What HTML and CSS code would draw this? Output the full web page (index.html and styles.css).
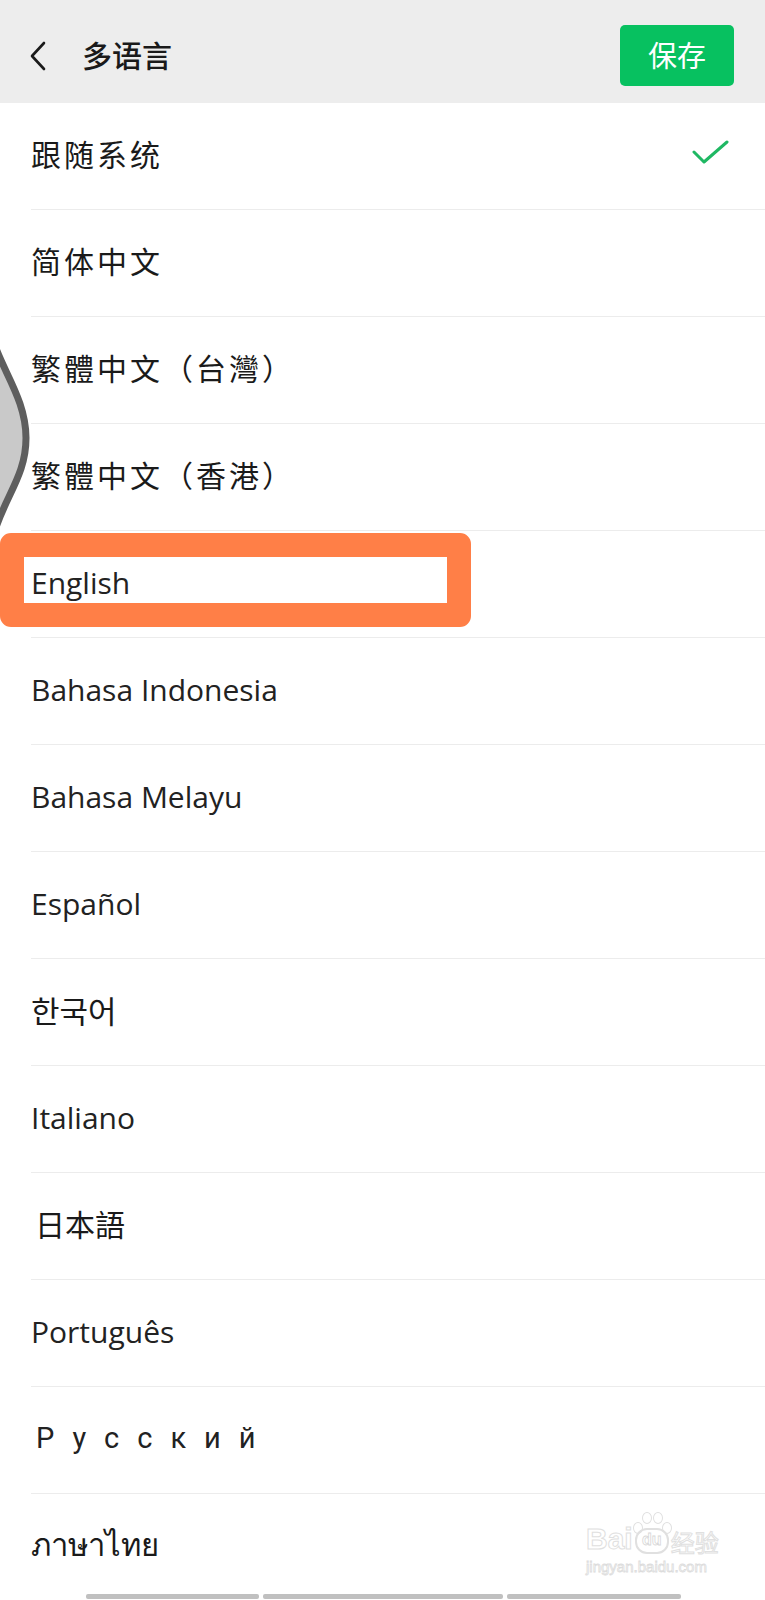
FILE: index.html
```html
<!DOCTYPE html>
<html lang="zh-CN">
<head>
    <meta charset="UTF-8">
    <meta name="viewport" content="width=device-width, initial-scale=1.0">
    <title>多语言</title>
    <link rel="stylesheet" href="styles.css">
</head>
<body>
    <div class="screen">
        <header class="topbar">
            <div class="topbar-left">
                <svg class="back-icon" width="18" height="30" viewBox="0 0 18 30">
                    <polyline points="15,2 3,15 15,28" fill="none" stroke="#1a1a1a" stroke-width="2.6" stroke-linecap="round" stroke-linejoin="round"/>
                </svg>
                <h1 class="title">多语言</h1>
            </div>
            <button type="button" class="save-btn">保存</button>
        </header>

        <ul class="lang-list">
            <li class="lang-item cjk">
                <span>跟随系统</span>
                <svg class="check" width="38" height="28" viewBox="0 0 38 28">
                    <polyline points="2,13 12,23 35,3" fill="none" stroke="#1fb863" stroke-width="3" stroke-linecap="round" stroke-linejoin="round"/>
                </svg>
            </li>
            <li class="lang-item cjk"><span>简体中文</span></li>
            <li class="lang-item cjk tc"><span>繁體中文（台灣）</span></li>
            <li class="lang-item cjk tc"><span>繁體中文（香港）</span></li>
            <li class="lang-item latin"><span>English</span></li>
            <li class="lang-item latin"><span>Bahasa Indonesia</span></li>
            <li class="lang-item latin"><span>Bahasa Melayu</span></li>
            <li class="lang-item latin"><span>Español</span></li>
            <li class="lang-item kr"><span>한국어</span></li>
            <li class="lang-item latin"><span>Italiano</span></li>
            <li class="lang-item cjk jp"><span>日本語</span></li>
            <li class="lang-item latin"><span>Português</span></li>
            <li class="lang-item ru"><span>Русский</span></li>
            <li class="lang-item th"><span>ภาษาไทย</span></li>
        </ul>

        <!-- side drawer handle -->
        <svg class="side-handle" width="40" height="190" viewBox="0 0 40 190">
            <path d="M-6,0 C4,30 26,58 26,95 C26,132 6,152 -6,190 Z" fill="#c9c9c9" stroke="#5e5e5e" stroke-width="7"/>
        </svg>

        <!-- highlight frame around English -->
        <div class="highlight"></div>

        <div class="watermark">
            <div class="wm-logo">
                <span>Bai</span>
                <span class="wm-paw">
                    <i class="toe t1"></i><i class="toe t2"></i><i class="toe t3"></i><i class="toe t4"></i>
                    <b>du</b>
                </span>
                <span class="wm-cn">经验</span>
            </div>
            <div class="wm-url">jingyan.baidu.com</div>
        </div>

        <div class="scroll-bars">
            <span class="bar b1"></span>
            <span class="bar b2"></span>
            <span class="bar b3"></span>
        </div>
    </div>
</body>
</html>
```

FILE: styles.css
```css
body {
    margin: 0;
    padding: 0;
    background-color: #fff;
    font-family: "Noto Sans CJK SC", sans-serif;
    color: #1a1a1a;
}

.screen {
    position: relative;
    width: 765px;
    height: 1600px;
    overflow: hidden;
    background-color: #fff;
}

/* top bar */

.topbar {
    height: 103px;
    box-sizing: border-box;
    padding: 8px 31px 0 29px;
    background-color: #ededed;
    display: flex;
    align-items: center;
    justify-content: space-between;
}

.topbar-left {
    display: flex;
    align-items: center;
}

.back-icon {
    display: block;
}

.title {
    margin: 0 0 4px 35px;
    font-size: 30px;
    font-weight: 500;
    letter-spacing: 0;
    line-height: 1;
}

.save-btn {
    width: 114px;
    height: 61px;
    border: none;
    border-radius: 5px;
    background-color: #07c160;
    color: #fff;
    font-family: "Noto Sans CJK SC", sans-serif;
    font-size: 29px;
    padding: 0 0 3px 0;
    margin-top: 0;
}

/* language list */

.lang-list {
    list-style: none;
    margin: 0;
    padding: 0;
}

.lang-item {
    box-sizing: border-box;
    height: 107px;
    margin-left: 31px;
    padding: 0 35px 4px 0;
    border-bottom: 1px solid #ececec;
    display: flex;
    align-items: center;
    justify-content: space-between;
    font-size: 29px;
}

.lang-item.cjk {
    font-family: "Noto Sans CJK SC", serif;
    font-size: 30px;
    letter-spacing: 3px;
    padding-bottom: 6px;
}

.lang-item.tc {
    font-family: "Noto Sans CJK TC", serif;
    letter-spacing: 3px;
}

.lang-item.jp {
    font-family: "Noto Sans CJK JP", serif;
    padding-left: 4px;
    letter-spacing: 0;
}

.lang-item.latin {
    font-family: "Open Sans", Lato, sans-serif;
    font-size: 30px;
    color: #222;
}

.lang-item.kr {
    font-family: "Noto Sans CJK KR", sans-serif;
    font-size: 31px;
    padding-bottom: 6px;
}

.lang-item.ru {
    font-family: Roboto, sans-serif;
    font-size: 29px;
    letter-spacing: 18px;
    padding-left: 5px;
    font-weight: 400;
    color: #222;
}

.lang-item.th {
    font-family: "Noto Sans", "DejaVu Sans", sans-serif;
    font-size: 31px;
}

.check {
    display: block;
}

/* overlays */

.side-handle {
    position: absolute;
    left: 0;
    top: 343px;
}

.highlight {
    position: absolute;
    left: 0;
    top: 533px;
    width: 471px;
    height: 94px;
    box-sizing: border-box;
    border: 24px solid #ff7f47;
    border-radius: 11px;
}

.watermark {
    position: absolute;
    left: 586px;
    top: 1508px;
    width: 140px;
    color: #fff;
    font-family: "Liberation Sans", sans-serif;
    -webkit-text-stroke: 1px #e0e0e0;
}

.wm-logo {
    display: flex;
    align-items: flex-end;
    font-size: 30px;
    font-weight: bold;
    line-height: 1;
    height: 46px;
}

.wm-paw {
    position: relative;
    display: inline-block;
    width: 34px;
    height: 28px;
    margin: 0 1px;
}

.wm-paw b {
    position: absolute;
    left: 1px;
    bottom: 0;
    width: 30px;
    height: 22px;
    border: 2px solid #e0e0e0;
    border-radius: 12px;
    font-size: 16px;
    text-align: center;
    line-height: 20px;
    -webkit-text-stroke: 0.8px #d8d8d8;
}

.toe {
    position: absolute;
    width: 8px;
    height: 10px;
    border: 1.5px solid #e0e0e0;
    border-radius: 50%;
}

.t1 { left: -1px; top: -4px; }
.t2 { left: 8px; top: -14px; }
.t3 { left: 19px; top: -14px; }
.t4 { left: 28px; top: -4px; }

.wm-cn {
    font-family: "Noto Sans CJK SC", sans-serif;
    font-size: 24px;
    font-weight: 400;
    margin-left: 2px;
}

.wm-url {
    margin-top: 4px;
    font-size: 15px;
    font-weight: normal;
    -webkit-text-stroke: 0.8px #dcdcdc;
}

.scroll-bars {
    position: absolute;
    left: 86px;
    bottom: 1px;
    display: flex;
    gap: 4px;
}

.bar {
    display: block;
    height: 5px;
    border-radius: 2px;
    background-color: #c0c0c0;
}

.b1 { width: 173px; }
.b2 { width: 240px; }
.b3 { width: 174px; }
```
